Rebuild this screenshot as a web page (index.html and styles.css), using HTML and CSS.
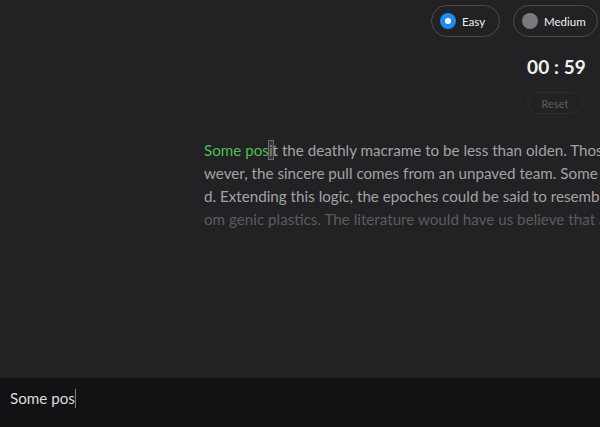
FILE: index.html
```html
<!DOCTYPE html>
<html>
<head>
<meta charset="utf-8">
<link rel="stylesheet" href="styles.css">
</head>
<body>
<div class="app">
  <header class="levels">
    <button class="pill"><span class="radio on"></span><span class="pill-label">Easy</span></button>
    <button class="pill"><span class="radio"></span><span class="pill-label">Medium</span></button>
  </header>
  <div class="controls">
    <div class="timer">00 : 59</div>
    <button class="reset">Reset</button>
  </div>
  <div class="passage">
    <div class="line"><span class="typed">Some pos</span><span class="cursor">i</span>t the deathly macrame to be less than olden. Those</div>
    <div class="line">wever, the sincere pull comes from an unpaved team. Some p</div>
    <div class="line">d. Extending this logic, the epoches could be said to resembl</div>
    <div class="line faded">om genic plastics. The literature would have us believe that a</div>
  </div>
  <div class="spacer"></div>
  <div class="input-bar"><span class="input-text">Some pos</span><span class="caret"></span></div>
</div>
</body>
</html>
```
FILE: styles.css
```css
html, body {
  margin: 0;
  padding: 0;
  height: 100%;
}
body {
  background: #222124;
  font-family: "Lato", "Open Sans", sans-serif;
  overflow: hidden;
}
.app {
  height: 427px;
  display: flex;
  flex-direction: column;
}
.levels {
  display: flex;
  justify-content: flex-end;
  gap: 13px;
  padding: 5px 2px 0 0;
}
.pill {
  display: flex;
  align-items: center;
  gap: 6px;
  height: 32px;
  box-sizing: border-box;
  border: 1px solid #4a494c;
  border-radius: 16px;
  background: transparent;
  padding: 0 8px 0 8px;
  font-family: inherit;
  color: #f0f0f0;
  font-size: 11.5px;
}
.pill:first-child { width: 69px; }
.pill:last-child { width: 85px; }
.radio {
  flex-shrink: 0;
  width: 16px;
  height: 16px;
  border-radius: 50%;
  background: #7a797c;
  box-sizing: border-box;
}
.radio.on {
  background: #fff;
  border: 5px solid #1e8cf0;
}
.controls {
  display: flex;
  flex-direction: column;
  align-items: flex-end;
  padding-right: 14px;
}
.timer {
  margin-top: 18px;
  font-size: 19px;
  font-weight: 700;
  color: #f2f2f2;
  line-height: 24px;
  letter-spacing: 0.1px;
}
.reset {
  margin-top: 13px;
  margin-right: 3px;
  width: 56px;
  height: 22px;
  border: 1px solid #2c2b2e;
  border-radius: 11px;
  background: transparent;
  color: #5f5e61;
  font-family: inherit;
  font-size: 11px;
  padding: 0;
}
.passage {
  margin-top: 25px;
  padding-left: 204px;
  font-size: 15.2px;
  line-height: 23px;
  color: #a3a3a5;
}
.line {
  white-space: nowrap;
  overflow: hidden;
}
.faded { color: #5c5b5f; }
.typed { color: #4cbf4c; }
.cursor {
  outline: 1px solid #6a696c;
  background: #38373a;
  color: #8a898c;
}
.spacer { flex: 1; }
.input-bar {
  height: 49px;
  box-sizing: border-box;
  background: #121114;
  display: flex;
  align-items: flex-start;
  padding: 10px 0 0 10px;
  font-size: 15.2px;
  line-height: 21px;
  color: #dcdcdc;
}
.caret {
  width: 1px;
  height: 19px;
  margin-top: 1px;
  background: #5d8f6a;
}
```
